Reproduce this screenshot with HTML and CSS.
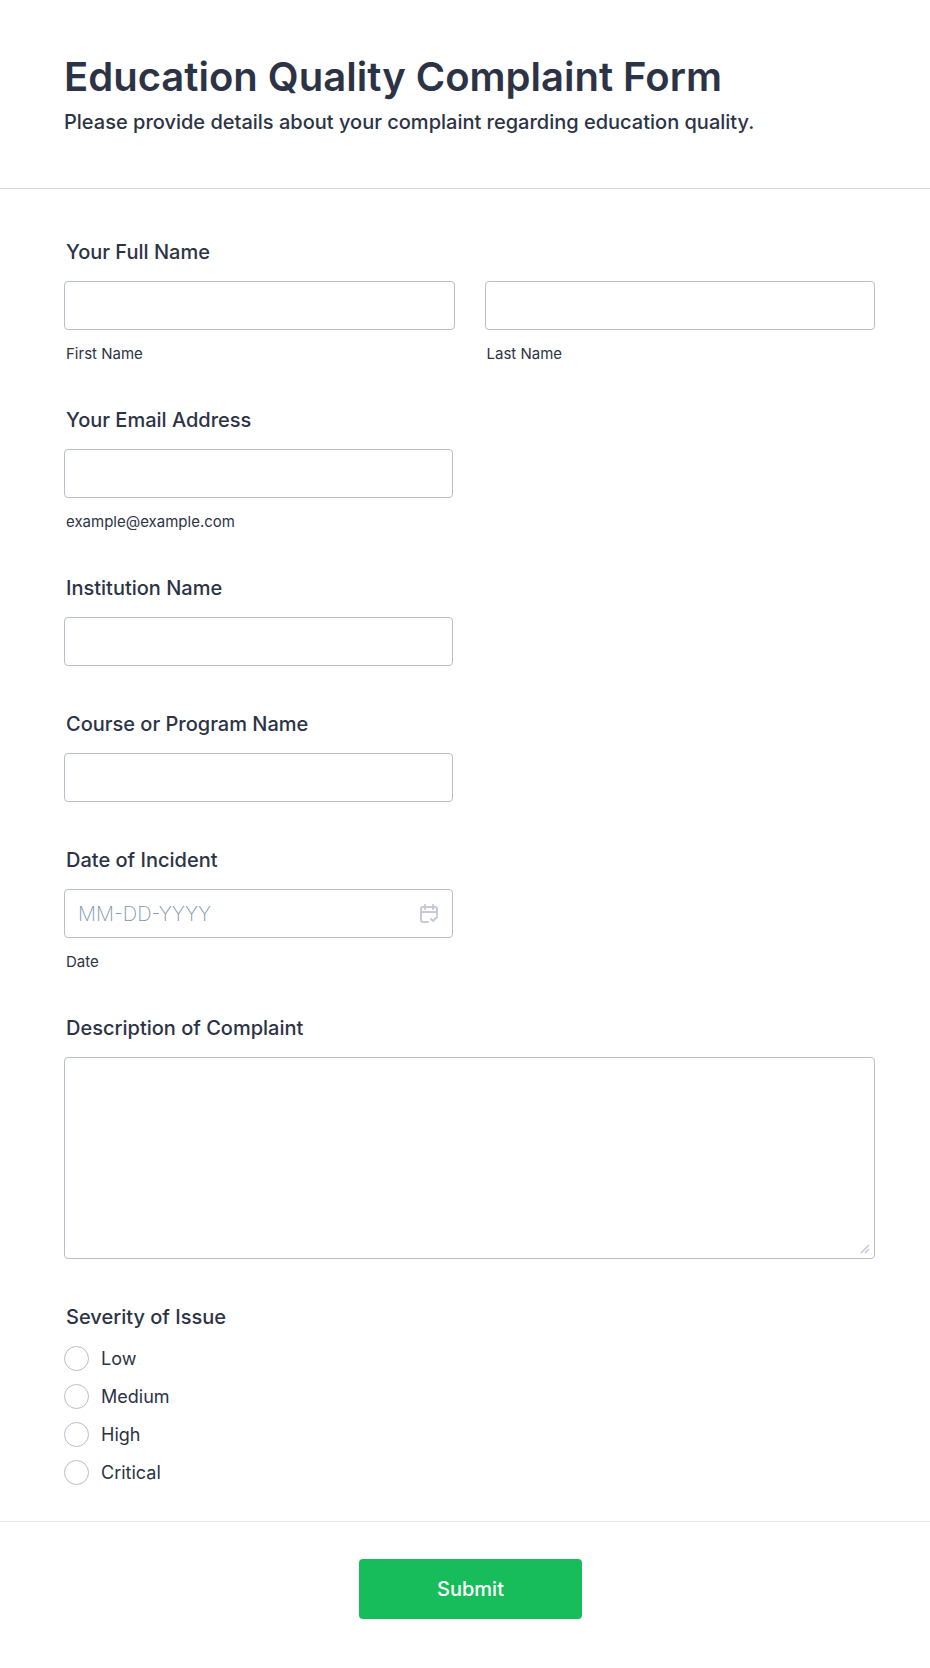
FILE: index.html
```html
<!DOCTYPE html>
<html lang="en">
<head>
    <meta charset="UTF-8">
    <meta name="viewport" content="width=device-width, initial-scale=1.0">
    <title>Education Quality Complaint Form</title>
    <link rel="stylesheet" href="styles.css">
</head>
<body>
    <form class="form" action="#" method="post">
        <header class="form-header">
            <h1>Education Quality Complaint Form</h1>
            <p>Please provide details about your complaint regarding education quality.</p>
        </header>

        <div class="questions">
            <fieldset class="question">
                <legend class="label">Your Full Name</legend>
                <div class="name-row">
                    <div class="field">
                        <input type="text" class="textbox" id="first" name="first">
                        <label class="sublabel" for="first">First Name</label>
                    </div>
                    <div class="field">
                        <input type="text" class="textbox" id="last" name="last">
                        <label class="sublabel" for="last">Last Name</label>
                    </div>
                </div>
            </fieldset>

            <div class="question half">
                <label class="label" for="email">Your Email Address</label>
                <input type="email" class="textbox" id="email" name="email" aria-describedby="email-hint">
                <span class="sublabel" id="email-hint">example@example.com</span>
            </div>

            <div class="question half">
                <label class="label" for="institution">Institution Name</label>
                <input type="text" class="textbox" id="institution" name="institution">
            </div>

            <div class="question half">
                <label class="label" for="course">Course or Program Name</label>
                <input type="text" class="textbox" id="course" name="course">
            </div>

            <div class="question half">
                <label class="label" for="date">Date of Incident</label>
                <div class="date-box">
                    <input type="text" class="textbox" id="date" name="date" placeholder="MM-DD-YYYY">
                    <button type="button" class="date-btn" aria-label="Choose date">
                        <svg width="18" height="20" viewBox="0 0 18 20" fill="none" stroke="currentColor" stroke-width="2" stroke-linecap="round" stroke-linejoin="round">
                            <path d="M8 18H3a2 2 0 0 1-2-2V5a2 2 0 0 1 2-2h12a2 2 0 0 1 2 2v6"/>
                            <path d="M1 8h16M5 1v4M13 1v4"/>
                            <path d="M11 15l2 2 4-4"/>
                        </svg>
                    </button>
                </div>
                <label class="sublabel" for="date">Date</label>
            </div>

            <div class="question">
                <label class="label" for="description">Description of Complaint</label>
                <div class="area-box">
                    <textarea class="textbox" id="description" name="description"></textarea>
                    <svg class="grip" width="10" height="10" viewBox="0 0 10 10" fill="none" stroke="currentColor" stroke-width="1.6">
                        <path d="M1 9l8-8M5 9l4-4"/>
                    </svg>
                </div>
            </div>

            <fieldset class="question">
                <legend class="label">Severity of Issue</legend>
                <div class="options">
                    <label class="option"><input type="radio" name="severity" value="low">Low</label>
                    <label class="option"><input type="radio" name="severity" value="medium">Medium</label>
                    <label class="option"><input type="radio" name="severity" value="high">High</label>
                    <label class="option"><input type="radio" name="severity" value="critical">Critical</label>
                </div>
            </fieldset>
        </div>

        <div class="form-footer">
            <button type="submit" class="submit">Submit</button>
        </div>
    </form>
</body>
</html>
```
FILE: styles.css
```css
*{
    box-sizing: border-box;
    margin: 0;
    padding: 0;
}
body{
    background: #fff;
    color: #2c3345;
    font-family: Inter, "Liberation Sans", sans-serif;
}
.form-header{
    padding: 53px 55px 53px 64px;
    border-bottom: 1px solid #d7d8e1;
}
.form-header h1{
    margin-bottom: 8px;
    font-size: 40px;
    line-height: 48px;
    font-weight: 600;
}
.form-header p{
    font-size: 20px;
    line-height: 26px;
    font-weight: 500;
}
.questions{
    display: flex;
    flex-direction: column;
    gap: 45px;
    padding: 50px 55px 36px 64px;
}
.question{
    display: flex;
    flex-direction: column;
    min-width: 0;
    border: 0;
}
.half{
    width: 48%;
}
.label{
    margin-bottom: 16px;
    padding: 0 2px;
    font-size: 20px;
    line-height: 26px;
    font-weight: 500;
}
.name-row{
    display: grid;
    grid-template-columns: 1fr 1fr;
    gap: 30px;
}
.field{
    display: flex;
    flex-direction: column;
}
.textbox{
    display: block;
    width: 100%;
    height: 49px;
    padding: 0 13px;
    border: 1px solid #b8bdc9;
    border-radius: 4px;
    background: #fff;
    color: #2c3345;
    font-family: inherit;
    font-size: 20px;
}
.textbox::placeholder{
    color: #8095ad;
    font-weight: 200;
    opacity: 1;
}
.sublabel{
    margin-top: 15px;
    padding: 0 2px;
    font-size: 15px;
    line-height: 17px;
}
.date-box,
.area-box{
    position: relative;
}
.date-btn{
    position: absolute;
    top: 0;
    right: 0;
    display: flex;
    align-items: center;
    justify-content: center;
    width: 48px;
    height: 49px;
    border: 0;
    background: none;
    color: #c5c9d8;
    cursor: pointer;
}
textarea.textbox{
    height: 202px;
    padding: 13px;
    resize: none;
}
.grip{
    position: absolute;
    right: 5px;
    bottom: 5px;
    color: #c5c9d8;
    pointer-events: none;
}
.options{
    display: flex;
    flex-direction: column;
    align-items: flex-start;
    gap: 13px;
}
.option{
    display: flex;
    align-items: center;
    gap: 12px;
    font-size: 18px;
    line-height: 25px;
}
.option input{
    appearance: none;
    width: 25px;
    height: 25px;
    border: 1px solid #b8bdc9;
    border-radius: 50%;
    background: #fff;
}
.option input:checked{
    border: 8px solid #18bd5b;
}
.form-footer{
    display: flex;
    justify-content: center;
    padding: 37px 53px 48px 64px;
    border-top: 1px solid #e6e8f0;
}
.submit{
    min-width: 223px;
    height: 60px;
    border: 0;
    border-radius: 4px;
    background: #18bd5b;
    color: #fff;
    font-family: inherit;
    font-size: 20px;
    font-weight: 500;
    cursor: pointer;
}
```
